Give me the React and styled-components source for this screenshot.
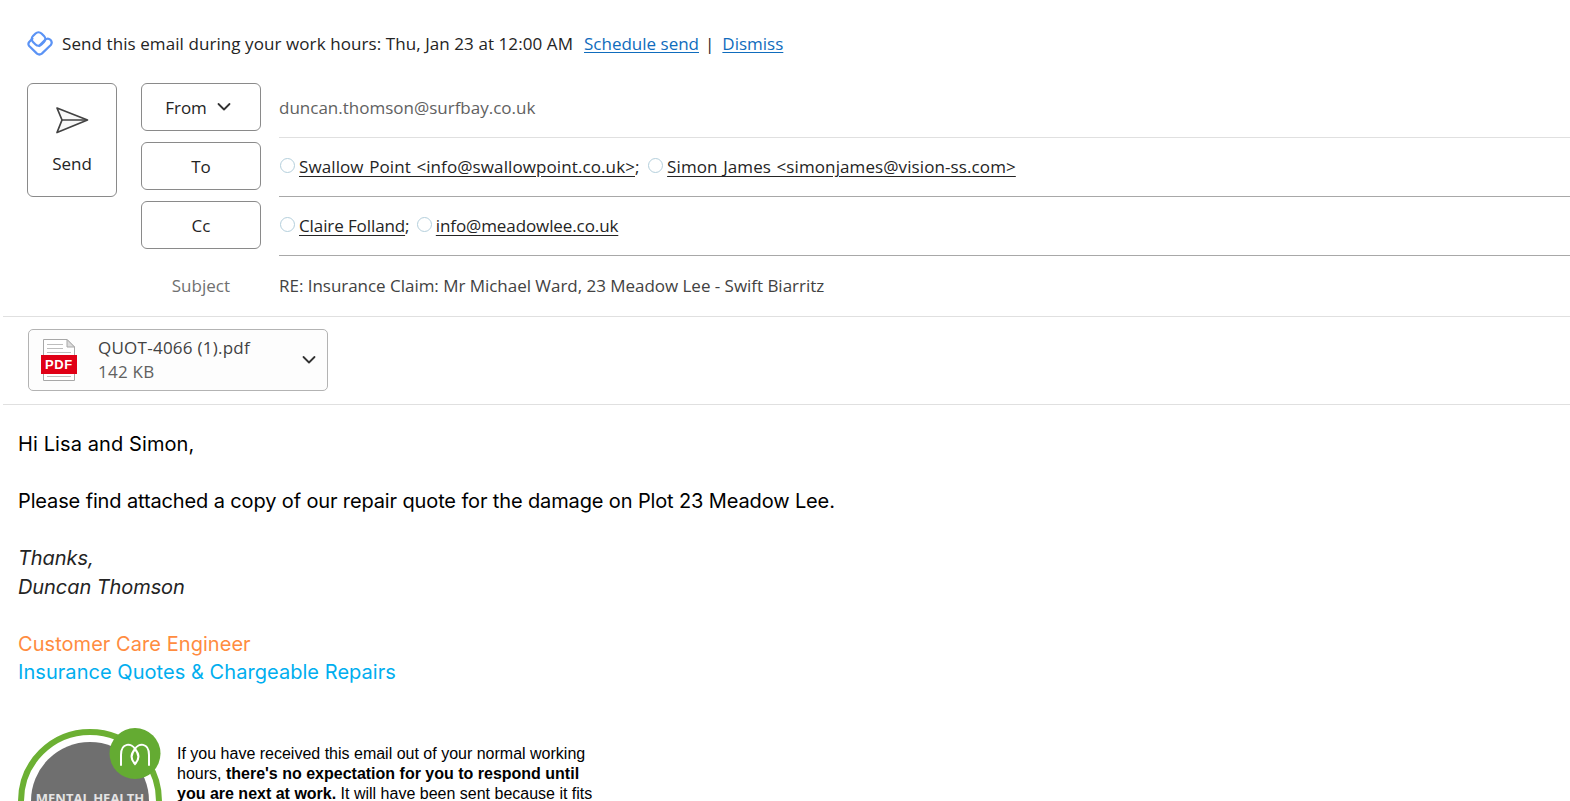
import React from "react";
import styled, { createGlobalStyle } from "styled-components";

const GlobalStyle = createGlobalStyle`
  html, body {
    margin: 0;
    padding: 0;
    height: 100%;
    overflow: hidden;
    background: #ffffff;
  }
`;

const Page = styled.div`
  width: 1570px;
  height: 801px;
  overflow: hidden;
  padding-left: 3px;
  box-sizing: border-box;
  font-family: "Open Sans", "Noto Sans", sans-serif;
  font-size: 17px;
  color: #242424;
`;

const Banner = styled.div`
  display: flex;
  align-items: center;
  height: 30px;
  padding: 28px 0 0 24px;
  white-space: pre;
`;

const BannerText = styled.span`
  margin: 0 2px 0 9px;
  letter-spacing: 0.08px;
`;

const BannerLink = styled.a`
  color: #0f6cbd;
  text-decoration: underline;
  text-underline-offset: 2px;
`;

const Sep = styled.span`
  margin: 0 8px 0 6px;
`;

const Compose = styled.div`
  display: flex;
  margin-top: 25px;
  padding-left: 24px;
  border-bottom: 1px solid #e0e0e0;
`;

const SendButton = styled.button`
  flex: none;
  width: 90px;
  height: 114px;
  padding: 0;
  background: #fff;
  border: 1px solid #8a8a8a;
  border-radius: 6px;
  display: flex;
  flex-direction: column;
  align-items: center;
  font: inherit;
  color: #242424;
  svg {
    margin-top: 22px;
    margin-bottom: 18px;
  }
`;

const Fields = styled.div`
  flex: 1;
  margin-left: 24px;
  display: grid;
  grid-template-columns: 120px 1fr;
  column-gap: 18px;
  grid-auto-rows: 59px;
  height: 233px;
`;

const LabelButton = styled.button`
  height: 48px;
  width: 120px;
  padding: 0 ${(p) => (p.$menu ? "6px" : "0")} 0 0;
  background: #fff;
  border: 1px solid #8a8a8a;
  border-radius: 6px;
  display: flex;
  align-items: center;
  justify-content: center;
  gap: 10px;
  font: inherit;
  color: #242424;
`;

const SubjectLabel = styled.div`
  height: 50px;
  display: flex;
  align-items: center;
  justify-content: flex-end;
  padding-right: 31px;
  color: #707070;
`;

const FieldValue = styled.div`
  height: 55px;
  padding-bottom: 5px;
  box-sizing: border-box;
  display: flex;
  align-items: center;
  white-space: pre;
  letter-spacing: ${(p) => p.$spacing || "0"};
  word-spacing: ${(p) => p.$word || "0"};
  color: ${(p) => p.$color || "#242424"};
  border-bottom: ${(p) => (p.$line ? `1px solid ${p.$line}` : "none")};
`;

const SubjectValue = styled(FieldValue)`
  height: 50px;
  padding-bottom: 0;
  color: #424242;
`;

const Persona = styled.span`
  display: inline-block;
  width: 15px;
  height: 15px;
  margin: 0 4px 3px 1px;
  border: 1px solid #b4cfdc;
  border-radius: 50%;
  box-sizing: border-box;
  &:not(:first-child) {
    margin-left: 3px;
  }
`;

const Recipient = styled.span`
  text-decoration: underline;
  text-underline-offset: 3px;
`;

const AttachmentRow = styled.div`
  height: 87px;
  padding-left: 25px;
  display: flex;
  align-items: center;
  border-bottom: 1px solid #e0e0e0;
`;

const AttachmentCard = styled.div`
  width: 300px;
  height: 62px;
  box-sizing: border-box;
  margin-top: -1px;
  border: 1px solid #b3b3b3;
  border-radius: 5px;
  background: #fdfdfd;
  display: flex;
  align-items: center;
  padding: 0 11px 0 12px;
`;

const AttachmentInfo = styled.div`
  flex: 1;
  margin-left: 21px;
  line-height: 24px;
  letter-spacing: 0.25px;
  color: #424242;
`;

const AttachmentSize = styled.div`
  color: #616161;
`;

const Body = styled.div`
  padding: 25px 0 0 15px;
  font-family: "Inter", "Lato", sans-serif;
  font-size: 20px;
  line-height: 28.5px;
  letter-spacing: -0.13px;
  color: #000;
`;

const Para = styled.p`
  margin: 0 0 28.5px;
  letter-spacing: ${(p) => p.$spacing || "-0.13px"};
`;

const Closing = styled.p`
  margin: 0 0 28.5px;
  font-style: italic;
  letter-spacing: -0.08px;
  color: #242424;
`;

const Role = styled.div`
  letter-spacing: 0.05px;
  color: ${(p) => p.$color};
`;

const Footer = styled.div`
  display: flex;
  margin-top: 41px;
  font-family: "Liberation Sans", Arial, sans-serif;
  letter-spacing: 0;
`;

const Disclaimer = styled.div`
  margin: 16px 0 0 14px;
  font-size: 16px;
  line-height: 20px;
  white-space: nowrap;
  color: #000;
`;

const DisclaimerLine = styled.div``;

const SendIcon = () => (
  <svg width="34" height="28" viewBox="0 0 34 28" fill="none">
    <path
      d="M2 2 L32.5 14 L2 26.5 L7 14 Z"
      fill="#f8f8f8"
      stroke="#424242"
      strokeWidth="1.7"
      strokeLinejoin="round"
    />
    <path d="M7 14 H32" stroke="#424242" strokeWidth="1.5" />
  </svg>
);

const Chevron = () => (
  <svg width="14" height="14" viewBox="0 0 14 14" fill="none">
    <path
      d="M1.5 4 L7 9.5 L12.5 4"
      stroke="#333"
      strokeWidth="1.8"
      strokeLinecap="round"
      strokeLinejoin="round"
    />
  </svg>
);

const InsightsIcon = () => (
  <svg width="26" height="26" viewBox="0 0 26 26" fill="none">
    <g stroke="#5b93f5" strokeWidth="2.2" strokeLinejoin="round">
      <rect x="5.5" y="3" width="12" height="12" rx="4.2" transform="rotate(-45 11.5 9)" />
      <path d="M6 8 L2.2 12 Q0.6 14 2.2 16 L10 23.6 Q12.4 25.4 14.8 23.6 L23.8 15 Q25.8 12.4 23.4 9.8 Q20.8 7.4 18.2 9.8 L11.5 16.5" />
    </g>
  </svg>
);

const PdfIcon = () => (
  <svg width="36" height="42" viewBox="0 0 36 42">
    <path d="M2.5 0.5 H26 L33.5 8 V41.5 H2.5 Z" fill="#fff" stroke="#a8a8a8" strokeWidth="1" />
    <path d="M26 0.5 V8 H33.5 Z" fill="#dcdcdc" stroke="#a8a8a8" strokeWidth="1" />
    <path
      d="M6 5.5 H22 M6 9.5 H22 M6 13.5 H30 M6 37.5 H30"
      stroke="#bdbdbd"
      strokeWidth="1"
    />
    <rect x="0" y="16" width="36" height="19" fill="#e00016" />
    <text
      x="18"
      y="30"
      textAnchor="middle"
      fontFamily="Liberation Sans, Arial, sans-serif"
      fontWeight="700"
      fontSize="13"
      fill="#fff"
      letterSpacing="0.6"
    >
      PDF
    </text>
  </svg>
);

const MentalHealthBadge = () => (
  <svg width="145" height="145" viewBox="0 0 145 145" style={{ flex: "none" }}>
    <circle cx="72" cy="73" r="69" fill="#fff" stroke="#6cb033" strokeWidth="6" />
    <circle cx="72" cy="73" r="59" fill="#6f6f6f" />
    <text
      x="72"
      y="75"
      textAnchor="middle"
      fontFamily="Open Sans, sans-serif"
      fontWeight="700"
      fontSize="13"
      fill="#e4e4e4"
    >
      MENTAL HEALTH
    </text>
    <circle cx="117" cy="25.5" r="25.5" fill="#64ab32" />
    <g fill="none" stroke="#fff" strokeWidth="2" strokeLinecap="round">
      <path d="M103 37 V27 C103 14 114 15 117 21 C120 15 131 14 131 27 V37" />
      <path d="M117 21 C112 27 113 32 117 36 C121 32 122 27 117 21 Z" />
    </g>
  </svg>
);

export default function App() {
  return (
    <>
      <GlobalStyle />
      <Page>
        <Banner>
          <InsightsIcon />
          <BannerText>Send this email during your work hours: Thu, Jan 23 at 12:00 AM  </BannerText>
          <BannerLink>Schedule send</BannerLink>
          <Sep>|</Sep>
          <BannerLink>Dismiss</BannerLink>
        </Banner>

        <Compose>
          <SendButton>
            <SendIcon />
            Send
          </SendButton>
          <Fields>
            <LabelButton $menu>
              From
              <Chevron />
            </LabelButton>
            <FieldValue $color="#616161" $line="#e0e0e0">duncan.thomson@surfbay.co.uk</FieldValue>

            <LabelButton>To</LabelButton>
            <FieldValue $line="#a8a8a8" $spacing="0.1px" $word="1px">
              <Persona />
              <Recipient>Swallow Point &lt;info@swallowpoint.co.uk&gt;</Recipient>;{" "}
              <Persona />
              <Recipient>Simon James &lt;simonjames@vision-ss.com&gt;</Recipient>
            </FieldValue>

            <LabelButton>Cc</LabelButton>
            <FieldValue $line="#a8a8a8" $spacing="-0.1px">
              <Persona />
              <Recipient>Claire Folland</Recipient>;{" "}
              <Persona />
              <Recipient>info@meadowlee.co.uk</Recipient>
            </FieldValue>

            <SubjectLabel>Subject</SubjectLabel>
            <SubjectValue $spacing="-0.03px">RE: Insurance Claim: Mr Michael Ward, 23 Meadow Lee - Swift Biarritz</SubjectValue>
          </Fields>
        </Compose>

        <AttachmentRow>
          <AttachmentCard>
            <PdfIcon />
            <AttachmentInfo>
              QUOT-4066 (1).pdf
              <AttachmentSize>142 KB</AttachmentSize>
            </AttachmentInfo>
            <Chevron />
          </AttachmentCard>
        </AttachmentRow>

        <Body>
          <Para $spacing="0.1px">Hi Lisa and Simon,</Para>
          <Para>Please find attached a copy of our repair quote for the damage on Plot 23 Meadow Lee.</Para>
          <Closing>
            Thanks,
            <br />
            Duncan Thomson
          </Closing>
          <Role $color="#ff8c3f">Customer Care Engineer</Role>
          <Role $color="#00aeef">Insurance Quotes &amp; Chargeable Repairs</Role>
          <Footer>
            <MentalHealthBadge />
            <Disclaimer>
              <DisclaimerLine>If you have received this email out of your normal working</DisclaimerLine>
              <DisclaimerLine>hours, <b>there's no expectation for you to respond until</b></DisclaimerLine>
              <DisclaimerLine><b>you are next at work.</b> It will have been sent because it fits</DisclaimerLine>
            </Disclaimer>
          </Footer>
        </Body>
      </Page>
    </>
  );
}
